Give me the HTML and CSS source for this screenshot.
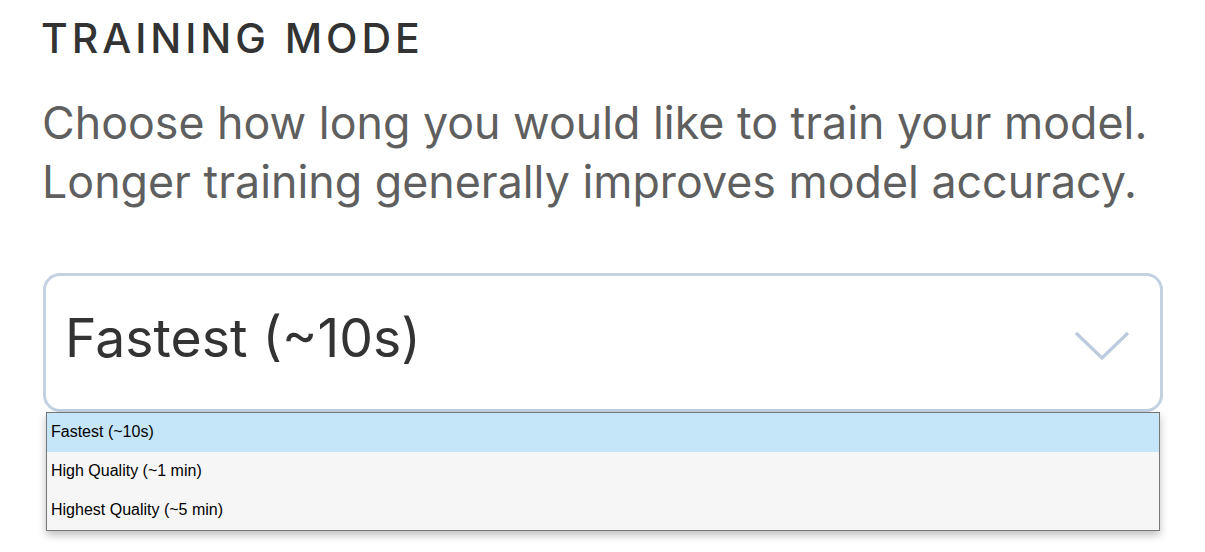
FILE: index.html
```html
<!DOCTYPE html>
<html>
<head>
<meta charset="utf-8">
<link rel="stylesheet" href="styles.css">
</head>
<body>
<div class="page">
  <h1 class="title">TRAINING MODE</h1>
  <p class="desc">Choose how long you would like to train your model. Longer training generally improves model accuracy.</p>
  <div class="select-wrap">
    <div class="select">
      <span class="value">Fastest (~10s)</span>
      <svg class="chevron" width="56" height="30" viewBox="0 0 56 30"><polyline points="2,2 28,27 54,2" fill="none" stroke="#bccbdd" stroke-width="3.2"/></svg>
    </div>
    <div class="menu">
      <div class="opt active">Fastest (~10s)</div>
      <div class="opt">High Quality (~1 min)</div>
      <div class="opt">Highest Quality (~5 min)</div>
    </div>
  </div>
</div>
</body>
</html>
```
FILE: styles.css
```css
html, body { margin: 0; padding: 0; background: #fff; }
body { min-height: 552px; }
.page {
  box-sizing: border-box;
  min-height: 552px;
  padding: 14px 43px 0 43px;
  font-family: Inter, "Noto Sans", sans-serif;
}
.title {
  margin: 0 0 0 -2px;
  font-size: 41px;
  font-weight: 500;
  letter-spacing: 0.096em;
  color: #333;
  line-height: 48px;
}
.desc {
  margin: 32px 0 0 -1px;
  font-size: 44.75px;
  line-height: 59px;
  color: #5f5f5f;
  font-weight: 400;
  width: 1120px;
}
.select-wrap { position: relative; margin-top: 61px; width: 1120px; }
.select {
  box-sizing: border-box;
  height: 139px;
  border: 3px solid #c3d1e2;
  border-radius: 17px;
  display: flex;
  align-items: center;
  justify-content: space-between;
  padding: 0 30px 0 19px;
}
.value { font-size: 53.5px; color: #333; margin-top: -10px; }
.chevron { margin-top: 6px; }
.menu {
  position: absolute;
  left: 3px;
  top: 139px;
  width: 1114px;
  box-sizing: border-box;
  border: 1px solid #777;
  background: #f6f6f6;
  box-shadow: 0 4px 8px rgba(0,0,0,0.25);
  font-family: "Liberation Sans", Arial, sans-serif;
  font-size: 16px;
  color: #000;
  z-index: 5;
}
.opt { height: 39px; line-height: 38px; padding-left: 4px; }
.opt.active { background: #c5e5f8; }
```
